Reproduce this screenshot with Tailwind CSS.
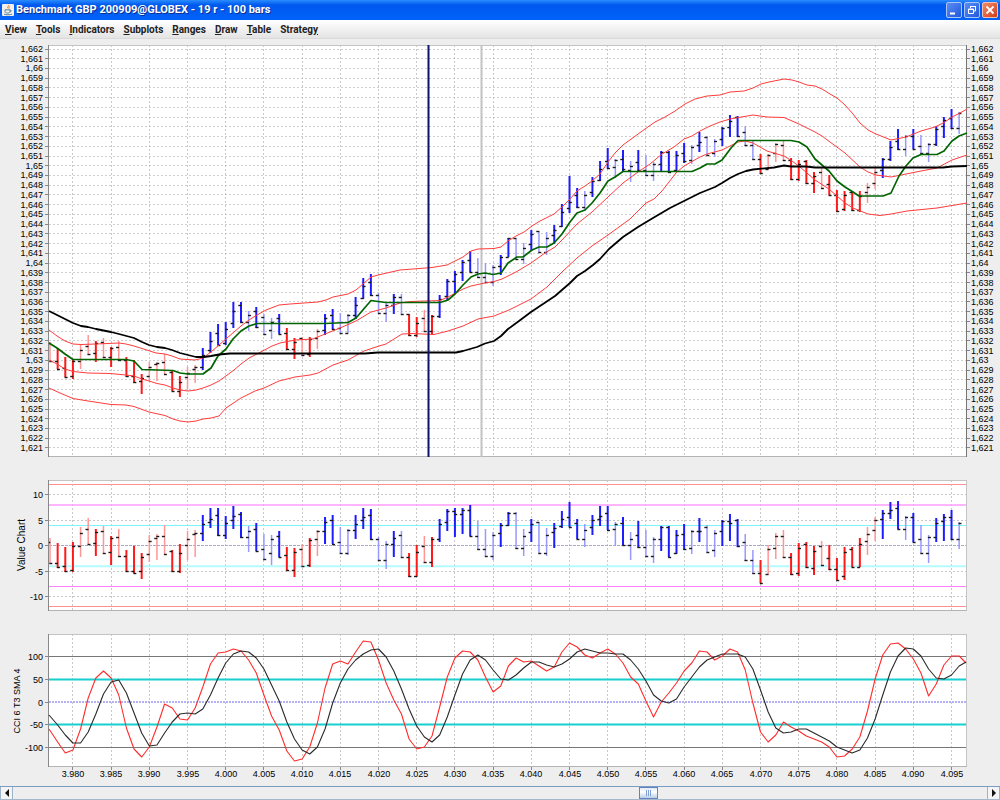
<!DOCTYPE html>
<html lang="en">
<head>
<meta charset="utf-8">
<title>Benchmark GBP 200909@GLOBEX - 19 r - 100 bars</title>
<script src="https://cdn.jsdelivr.net/npm/@tailwindcss/browser@4"></script>
</head>
<body class="flex min-h-screen flex-col bg-[#eeeeee] font-['Liberation_Sans',Arial,sans-serif] text-black">

<header class="flex h-5 items-center gap-0.5 bg-linear-to-b from-[#2a8bff] via-[#0058ee] via-25% to-[#0062fb] pl-0.5 pr-0.5">
  <svg class="size-3 shrink-0" viewBox="0 0 12 12" aria-hidden="true">
    <rect width="12" height="12" rx="1" fill="#f1efe8"/>
    <path d="M6.4 1c1 1-1.600 1.800-.6 3.200M7.800 2.400c-1.400.8-.6 1.400-1 2.200" fill="none" stroke="#e8802c" stroke-width="1"/>
    <path d="M3 5.800h5v1.700c0 1-1 1.500-2.500 1.500S3 8.500 3 7.500zM8 6.200c1.800-.2 1.500 1.600 0 1.600M2 10.200c2 .8 6 .8 8-.1" fill="none" stroke="#53809f" stroke-width="1"/>
  </svg>
  <h1 class="flex-1 whitespace-nowrap font-[Roboto,sans-serif] text-[11px] leading-5 font-bold text-white [text-shadow:1px_1px_0_#0a2f8f]">Benchmark GBP 200909@GLOBEX - 19 r - 100 bars</h1>
  <div class="flex gap-0.5">
    <button aria-label="Minimize" class="flex size-4 items-center justify-center rounded-xs border border-[#a9c4f8] bg-linear-to-br from-[#5b8df5] to-[#2257dc]">
      <svg class="size-3.5" viewBox="0 0 14 14"><path d="M3 10.500h5" stroke="#fff" stroke-width="2"/></svg>
    </button>
    <button aria-label="Restore" class="flex size-4 items-center justify-center rounded-xs border border-[#a9c4f8] bg-linear-to-br from-[#5b8df5] to-[#2257dc]">
      <svg class="size-3.5" viewBox="0 0 14 14"><path d="M5.500 5V3.500h5v4.500H9M3.500 6h5v4.500h-5zM3 6.500h6M5 3.500h6" fill="none" stroke="#fff" stroke-width="1"/></svg>
    </button>
    <button aria-label="Close" class="flex size-4 items-center justify-center rounded-xs border border-[#f3c0b4] bg-linear-to-br from-[#f08a68] to-[#d23c12]">
      <svg class="size-3.5" viewBox="0 0 14 14"><path d="M3.500 3.500l7 7M10.500 3.500l-7 7" stroke="#fff" stroke-width="1.800"/></svg>
    </button>
  </div>
</header>

<nav class="flex h-[19px] items-center gap-[9px] border-b border-[#dadada] bg-linear-to-b from-white to-[#e4e4e4] pl-[5px] font-[Roboto,sans-serif] text-[10px] font-bold text-[#222222]">
  <button><u>V</u>iew</button>
  <button><u>T</u>ools</button>
  <button><u>I</u>ndicators</button>
  <button><u>S</u>ubplots</button>
  <button><u>R</u>anges</button>
  <button><u>D</u>raw</button>
  <button><u>T</u>able</button>
  <button>Strateg<u>y</u></button>
</nav>

<main class="flex-1">
  <svg id="price" class="block w-full text-[9px]" viewBox="0 39 1000 431" role="img" aria-label="Price chart"></svg>
  <svg id="value" class="block w-full text-[9px]" viewBox="0 470 1000 155" role="img" aria-label="Value Chart"></svg>
  <svg id="cci" class="block w-full text-[9px]" viewBox="0 625 1000 161" role="img" aria-label="CCI 6 T3 SMA 4"></svg>
</main>

<footer class="flex h-[14px] border-y border-t-[#7a9cc4] border-b-[#a3b8cc] bg-[#eeeeee]">
  <button aria-label="Scroll left" class="flex w-[13px] items-center justify-center border-x border-[#9db4cc] bg-[#f4f4f4]">
    <svg class="size-2" viewBox="0 0 8 8"><path d="M6 0v8L2 4z" fill="#111"/></svg>
  </button>
  <input type="range" min="0" max="1000" value="656" aria-label="Scroll bars" class="h-3 min-w-0 flex-1 appearance-none bg-transparent [&::-webkit-slider-thumb]:h-3 [&::-webkit-slider-thumb]:w-[19px] [&::-webkit-slider-thumb]:appearance-none [&::-webkit-slider-thumb]:border [&::-webkit-slider-thumb]:border-[#6382bf] [&::-webkit-slider-thumb]:bg-[repeating-linear-gradient(90deg,#7f9fd6_0_1px,transparent_1px_2px),linear-gradient(#dfe9f5,#ffffff_40%,#b8cfe5)] [&::-webkit-slider-thumb]:bg-[length:5px_6px,100%_100%] [&::-webkit-slider-thumb]:bg-center [&::-webkit-slider-thumb]:bg-no-repeat">
  <button aria-label="Scroll right" class="flex w-[13px] items-center justify-center border-x border-[#9db4cc] bg-[#f4f4f4]">
    <svg class="size-2" viewBox="0 0 8 8"><path d="M2 0v8l4-4z" fill="#111"/></svg>
  </button>
</footer>

<script>
// Range bars: colour code, high, low, open, close, as heights on the canvas.
const priceBars = `P342,361,343,361 R348,369,361,369 R357,377,368,377 R359,379,376,361 P345,369,361,350 P335,355,346,354 R341,362,353,343 P338,358,342,357 R347,367,357,348 P341,361,347,360
R357,377,360,376 R360,383,376,382 R374,394,381,378 P362,381,376,367 P362,381,364,363 P354,374,362,374 R371,391,372,391 R376,397,391,382 P367,389,377,373 P365,383,369,367
B348,370,367,355 B332,353,350,341 B324,345,333,345 B322,345,343,329 B302,328,323,311 B302,323,305,322 L311,331,322,315 B307,328,311,327 L314,334,317,334 L318,339,330,322
B314,334,318,334 R328,350,333,349 R338,359,349,342 P337,355,338,355 R337,357,354,339 P329,349,338,331 B314,335,330,318 B309,330,315,329 L313,333,328,333 L314,333,333,315
B297,319,315,305 B278,299,298,286 B274,296,282,295 L293,313,295,313 L302,322,313,305 B294,314,305,297 L294,314,297,314 R314,336,314,335 R317,337,335,323 P310,331,318,331
R315,335,331,316 B295,318,316,299 B279,300,296,281 B271,293,281,274 B260,281,272,262 B251,272,260,272 L258,278,272,277 L263,283,277,282 L265,286,282,267 B255,275,266,257
B238,257,257,238 L238,259,238,259 L243,264,259,248 B230,251,244,234 L231,252,231,252 L232,255,252,238 B225,244,235,230 B204,227,226,212 B176,213,208,202 B188,208,195,207
L191,211,207,195 B177,197,192,181 B161,181,180,169 B148,169,161,168 L159,178,167,160 B150,171,159,169 L161,182,170,166 B150,171,162,170 L155,176,170,175 L162,181,175,164
B151,172,164,152 B151,173,152,172 B151,172,170,155 B143,163,153,161 L145,164,160,147 B132,152,145,142 L136,156,137,155 L139,157,153,141 B127,146,139,128 B115,137,127,121
B116,137,117,136 L126,146,132,145 L140,159,145,159 R154,174,159,173 P154,170,169,155 P143,162,153,144 P140,161,145,160 R158,180,160,179 R160,181,179,164 R160,184,161,183
R172,193,183,176 P168,189,172,188 R175,195,184,195 R190,212,195,211 R191,211,209,195 R191,211,192,210 R191,212,210,196 P183,203,192,187 P168,189,183,172 B158,178,170,159
B141,161,159,147 B129,150,141,149 L135,156,149,136 B129,149,136,149 L135,154,146,153 L143,162,153,144 B126,146,144,129 B117,138,126,120 B109,129,118,128 L112,134,128,113`;

const valueBars = `P538,563,542,563 R543,568,563,567 R547,572,566,571 R542,572,570,546 P527,557,546,533 P518,544,529,544 R529,556,543,532 P526,554,531,553 R536,565,552,538 P529,556,537,556
R550,572,556,571 R546,573,571,573 R553,579,571,557 P535,562,554,541 P534,560,538,536 P525,555,536,554 R550,572,551,571 R544,573,571,553 P531,560,545,539 P530,557,534,533
B515,541,533,524 B508,528,522,519 B508,536,515,535 B516,539,535,523 B506,529,520,516 B512,538,514,537 L526,552,537,531 B523,551,529,551 L534,560,549,559 L535,565,553,539
B531,557,536,557 R547,571,555,570 R548,577,570,552 P544,567,549,566 R538,567,565,540 P530,556,539,531 B517,544,531,522 B515,544,520,544 L527,553,542,553 L529,555,553,530
B515,539,530,524 B508,529,520,517 B509,540,515,539 L537,561,539,560 L541,569,560,544 B531,557,544,538 L531,557,535,557 R553,577,557,576 R545,577,576,552 P536,563,546,562
R537,567,562,539 B519,542,539,524 B509,531,522,511 B508,537,511,514 B508,534,514,510 B505,536,510,536 L521,549,536,549 L529,556,549,556 L532,560,556,535 B523,547,533,525
B512,526,525,513 L512,549,513,548 L529,556,548,536 B519,542,532,524 L522,553,522,553 L528,556,553,535 B523,548,532,528 B511,528,526,519 B502,527,517,527 B519,539,523,539
L524,547,539,530 B515,535,527,520 B506,526,519,516 B506,530,513,530 L522,546,529,524 B517,545,523,545 L532,560,545,539 B521,548,535,547 L530,556,547,556 L537,563,556,539
B526,551,539,527 B526,557,527,557 B530,554,553,535 B524,550,534,549 L530,554,548,531 B518,542,531,531 L525,552,527,552 L530,557,550,533 B520,546,531,521 B514,541,521,523
B519,547,520,546 L534,561,542,560 L550,573,560,573 R560,583,573,583 P545,575,574,549 P533,559,548,536 P530,558,536,557 R553,575,557,574 R543,576,573,548 R542,568,544,567
R546,575,568,551 P541,566,546,565 R545,570,558,569 R558,580,569,580 R547,580,576,552 R547,567,549,567 R538,567,567,544 P527,555,541,534 P517,541,530,520 B510,539,519,513
B502,519,513,510 B501,529,508,529 L516,540,529,517 B513,542,517,542 L525,553,539,553 L535,563,553,537 B518,542,537,523 B514,541,521,517 B510,540,517,539 L522,549,539,523`;

const slowAverage = "49,311 57,315 65,319 73,323 81,326 88,327 96,329 111,332 119,334 134,338 142,342 149,345 157,347 165,348 172,350 180,353 188,355 196,357 204,357 211,356 219,354.5 230,353.5 365,353.5 378,352.5 456,352.5 463,351 477,347 485,343.5 494,341 501,336 508,329 519,321 531,312 543,304 555,296 570,283 577,276 585,271 593,265 600,259 609,249 623,237 638,227 653,218 670,208 684,201 700,193 715,187 722,183 730,178 738,174 746,171 753,169.500 774,167.500 784,165.500 791,166.500 806,166.500 815,167.500 943,167.500 952,166.500 967,166";
const fastAverage = "49,343 57,348 65,354 73,359.5 126,359.5 134,361 142,369.5 173,370.5 180,373 188,374 203,374 211,368 218,356 226,349 233,339 241,331 249,326 257,323.5 325,323.5 348,322.5 356,318 371,300.5 378,301.5 386,302.5 440,302.5 448,300 455,294 463,285 471,277 478,274 485,273 493,274.5 501,273 508,263 517,257 523,257 532,250 539,247 547,247 554,243 562,234 570,222 577,213 585,210 592,203 600,193 608,181 615,177 623,171.5 692,171.5 700,168 707,164 715,164 722,160 731,148 738,140.5 791,140.5 799,142 807,147 815,159 822,165 829,171 837,181 845,187 853,192 859,196 883,196 891,193 899,176 906,166 913,158 921,154.5 937,154.5 944,151 952,141 959,136 967,133";
const bands = [
  "49,330 57,336 65,341 73,344 81,344.5 96,344 119,343 126,344 134,346 142,348.5 156,353 165,354 172,356 180,359 195,360 203,358 211,352 219,345 227,338 234,332 241,326 249,320 257,315 266,310 279,305 290,304 318,302 326,300 333,297 348,294 356,290 371,277 378,275 400,270 432,267.5 447,265 455,261 463,257 471,251 478,249 494,248.5 501,247 508,241 516,236 524,232 532,226 540,221 554,214 562,207 570,199 577,191 585,186 592,181 600,174 608,162 615,153 623,145 645,129 655,122 665,117 675,111 685,104 695,99 707,96 720,95 730,92 744,91 753,88 761,84 769,82 784,79 792,80 799,82 807,85 815,86 822,89 830,94 837,98 845,105 853,114 860,123 868,130 876,134 891,140 906,137 921,131 935,127 945,122 952,117 960,113 967,109",
  "49,360 57,364 65,369 73,371.5 88,373 110,373.5 126,375 134,376 142,379 149,381 157,383.5 165,385 173,388 180,390 188,391 196,390 203,388 211,385 219,381 234,370 241,364 249,358 257,354 272,346 280,343 295,340 313,339 325,334 340,328 356,321 371,312 386,308 400,303 410,301.5 440,300.5 448,297 463,289 471,286 485,283 494,281.5 502,279 516,272 531,263 545,253 555,247 562,240 577,224 592,212 608,197 623,183 638,172 650,164 662,154 674,147 684,139 692,136 700,131 710,126 720,122 730,119 753,115 767,117 784,117.5 799,124 815,132 822,136 830,142 845,153 860,167 868,172 876,175 891,177 906,174 921,171 937,168 952,160 967,155",
  "49,388 60,393 73,398.5 88,401 111,404.5 126,405 134,406.5 149,412 165,415.5 173,419 180,421 188,422 196,421 203,419 211,418 219,416 226,408 241,398 255,391 264,388 279,381 295,377 310,375 318,373 333,365 348,360 364,351 379,346 386,344 402,334 412,333.5 434,334.5 448,331 463,326 478,319 494,316 509,310 531,299 547,287 562,272 577,258 592,246 608,235 630,219 646,203 654,199 662,191 676,173 684,166 700,157 707,154 722,150 738,142 745,141 753,143 767,151 784,156 792,161 800,167 815,180 829,189 837,196 845,203 853,208 868,214 880,215.5 891,214 907,211 937,208 967,203"
];
const cciLine = [729,742,753,750,729,698,678,671,678,695,728,749,757,747,727,704,708,719,720,708,687,664,653,652,649,651,660,673,695,716,730,751,761,759,747,723,688,664,661,664,652,641,642,660,683,700,714,739,749,747,736,707,677,658,651,652,660,677,692,686,666,658,662,661,666,671,667,652,643,647,655,658,653,649,654,663,677,684,701,717,702,693,683,671,663,651,652,660,656,649,652,670,703,732,742,735,722,727,731,736,739,742,747,757,756,749,737,711,679,655,644,643,649,659,673,696,684,665,656,656,663];
const smaLine = [715,725,735,743,743,732,714,694,682,680,693,713,733,746,745,733,722,714,713,714,709,695,678,663,654,651,652,658,669,685,701,722,739,750,754,747,729,703,683,669,660,654,650,649,657,671,689,709,726,737,742,735,717,695,674,660,655,660,670,679,680,675,668,662,662,665,667,664,659,652,649,651,653,653,654,654,660,669,681,695,701,703,699,687,677,667,660,657,654,654,654,657,669,690,712,728,733,732,729,729,733,737,741,747,750,753,750,738,719,695,672,656,648,649,656,669,678,679,675,666,662];

const x = i => 50 + i * 7.64;
const colours = { R: "#ff1a1a", P: "#ff9696", B: "#1c1cff", L: "#9898ff" };
const line = (x1, y1, x2, y2, c, w = 1, dash = "") =>
  `<line x1="${x1}" y1="${y1}" x2="${x2}" y2="${y2}" stroke="${c}" stroke-width="${w}"${dash ? ` stroke-dasharray="${dash}"` : ""}/>`;
const poly = (pts, c, w) => `<polyline points="${pts}" fill="none" stroke="${c}" stroke-width="${w}" stroke-linejoin="round"/>`;
const label = (tx, ty, s, anchor) => `<text x="${tx}" y="${ty}" text-anchor="${anchor}">${s}</text>`;
const series = a => a.map((y, i) => `${i === 0 ? 49 : Math.min(x(i), 966)},${y}`).join(" ");
const frame = (top, bottom) => `<rect x="48" y="${top}" width="919" height="${bottom - top}" fill="#fff"/>`;
const border = (top, bottom) =>
  line(48, top + .5, 967, top + .5, "#c4c4c4") + line(966.5, top, 966.5, bottom, "#c4c4c4") +
  line(48, bottom - .5, 967, bottom - .5, "#b4b4b4") + line(48.5, top, 48.5, bottom, "#888", 1);

function verticals(top, bottom) {
  let s = "";
  for (let i = 3; i < 120; i += 5) { const p = Math.floor(x(i)) + .5; s += line(p, top, p, bottom, "#c8c8c8", 1, "2 2"); }
  return s;
}
function bars(text) {
  return text.trim().split(/\s+/).map((b, i) => {
    const [hi, lo, o, c] = b.slice(1).split(",").map(Number), p = x(i), k = b[0];
    return line(p, hi, p, lo, colours[k], k === "R" || k === "B" ? 2 : 1.5) +
      line(Math.max(p - 2.7, 49), o + .5, p + .3, o + .5, "#1a1a1a", 1.4) + line(p - .7, c + .5, p + 2.3, c + .5, "#1a1a1a", 1.4);
  }).join("");
}

let s = frame(45, 457);
for (let v = 1662; v >= 1621; v--) {
  const y = 49 + (1662 - v) * 9.73, g = Math.floor(y) + .5;
  const t = "1," + String(v - 1000).replace(/0$/, "");
  s += line(49, g, 967, g, "#cecece", 1, "2 2") + line(45, g, 48, g, "#888") + line(967, g, 970, g, "#888") +
    label(43, Math.round(y + 3), t, "end") + label(971, Math.round(y + 3), t, "start");
}
s += verticals(45, 457) + border(45, 457) + line(966.5, 45, 966.5, 457, "#777", 1);
s += line(481.5, 45, 481.5, 457, "#c2c2c2", 2);
s += bars(priceBars) + bands.map(b => poly(b, "#ff3c3c", 1)).join("");
s += poly(fastAverage, "#006400", 1.7) + poly(slowAverage, "#000", 1.8) + line(428.5, 45, 428.5, 457, "#10106e", 2);
document.getElementById("price").innerHTML = s;

s = frame(480, 611) + verticals(480, 611);
for (const [v, y] of [["10", 494], ["5", 520], ["0", 545], ["-5", 571], ["-10", 596]])
  s += line(49, y + .5, 966, y + .5, v === "0" ? "#a8a8cc" : "#c8c8c8", 1, v === "0" ? "3 1" : "2 2") + line(45, y + .5, 48, y + .5, "#888") + label(43, y + 4, v, "end");
for (const [y, c, w] of [[484.5, "#ff9090", 1], [505, "#ff9cff", 1.5], [525.5, "#7cf4f8", 1.2], [566.3, "#b4fbff", 2], [586.5, "#ff80ff", 1], [606.5, "#ff9090", 1]])
  s += line(49, y, 966, y, c, w);
s += border(480, 611) + bars(valueBars) + `<text transform="translate(25 545) rotate(-90)" text-anchor="middle" class="text-[10px]">Value Chart</text>`;
document.getElementById("value").innerHTML = s;

s = frame(634, 767) + verticals(634, 767);
for (const [v, y] of [["100", 656], ["50", 679], ["0", 702], ["-50", 724], ["-100", 747]])
  s += line(45, y + .5, 48, y + .5, "#888") + label(43, y + 4, v, "end");
s += line(49, 656.5, 966, 656.5, "#777") + line(49, 747.5, 966, 747.5, "#777") + line(49, 702, 966, 702, "#9a9af0", 1.3, "2 1") +
  line(49, 679.5, 966, 679.5, "#18cfcf", 2) + line(49, 724.5, 966, 724.5, "#18cfcf", 2);
s += border(634, 767) + poly(series(cciLine), "#ff2c2c", 1.1) + poly(series(smaLine), "#2a2a2a", 1.1);
for (let i = 3; i < 120; i += 5) {
  s += line(Math.floor(x(i)) + .5, 767, Math.floor(x(i)) + .5, 770, "#888") + label(Math.round(x(i)), 777, ((3977 + i) / 1000).toFixed(3), "middle");
}
s += `<text transform="translate(20 701) rotate(-90)" text-anchor="middle">CCI 6 T3 SMA 4</text>`;
document.getElementById("cci").innerHTML = s;
</script>
</body>
</html>
